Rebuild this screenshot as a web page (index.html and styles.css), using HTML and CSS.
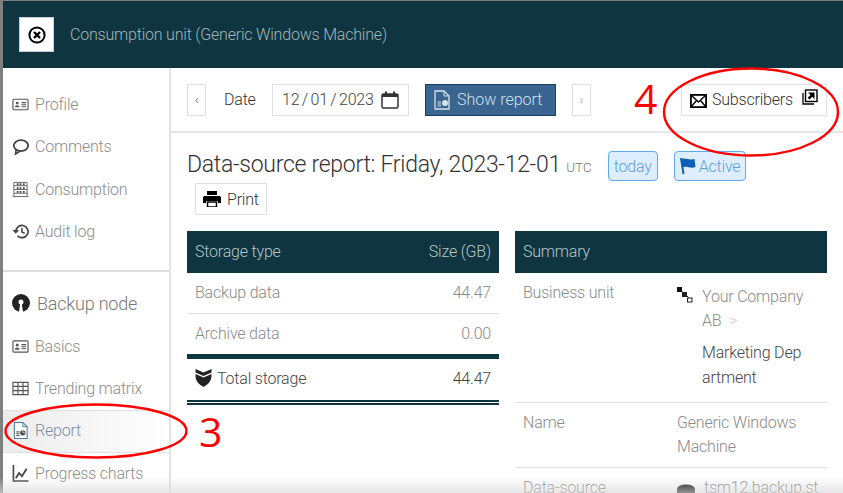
FILE: index.html
```html
<!DOCTYPE html>
<html lang="en">
<head>
<meta charset="utf-8">
<title>Consumption unit</title>
<link rel="stylesheet" href="styles.css">
</head>
<body>
<div class="app">
  <header class="topbar">
    <button class="close-btn" aria-label="Close">
      <svg width="18" height="18" viewBox="0 0 18 18"><circle cx="9" cy="9" r="7.6" fill="none" stroke="#000" stroke-width="2"/><path d="M6 6l6 6M12 6l-6 6" stroke="#000" stroke-width="2.4"/></svg>
    </button>
    <span class="topbar-title">Consumption unit (Generic Windows Machine)</span>
  </header>
  <div class="body">
    <nav class="sidebar">
      <ul class="nav-group nav-first">
        <li class="nav-item"><svg class="nav-icon" viewBox="0 0 18 18"><rect x="1" y="3.5" width="16" height="11" rx="1" fill="none" stroke="#555" stroke-width="1.2"/><circle cx="5.5" cy="7.5" r="1.5" fill="#555"/><path d="M3 12c0-3 5-3 5 0z" fill="#555"/><path d="M10 7h5M10 9.2h5M10 11.4h5" stroke="#555" stroke-width="1.1"/></svg>Profile</li>
        <li class="nav-item"><svg class="nav-icon" viewBox="0 0 18 18"><ellipse cx="9.5" cy="8" rx="7.6" ry="5.800" fill="none" stroke="#444" stroke-width="1.900"/><path d="M4.500 12l-.8 5 4.600-3" fill="none" stroke="#444" stroke-width="1.700"/></svg>Comments</li>
        <li class="nav-item nav-shift"><svg class="nav-icon" viewBox="0 0 18 18"><path d="M2 1.500v14.500M16 1.500v14.500M.5 16.500h17M2 1.500h14M2 5h14M2 9h14M2 13h14" fill="none" stroke="#666" stroke-width="1"/><path d="M6 2.500v10M9 2.500v10M12.500 2.500v10" stroke="#444" stroke-width="1.800" stroke-dasharray="2 2"/></svg>Consumption</li>
        <li class="nav-item"><svg class="nav-icon" viewBox="0 0 18 18"><path d="M4 8.500a6.500 6.500 0 1 1 1.900 5.200" fill="none" stroke="#444" stroke-width="1.800"/><path d="M.5 7.500h7l-3.500 4z" fill="#444"/><path d="M10.500 5v4.500l3 1.500" fill="none" stroke="#444" stroke-width="1.600"/></svg>Audit log</li>
      </ul>
      <ul class="nav-group nav-second">
        <li class="nav-item nav-heading"><svg class="nav-icon-lg" viewBox="0 0 18 18"><circle cx="9" cy="9" r="9" fill="#222"/><circle cx="9" cy="8" r="2.500" fill="#fff"/><path d="M8.300 9l-1.300 9h4l-1.300-9z" fill="#fff"/></svg>Backup node</li>
        <li class="nav-item"><svg class="nav-icon" viewBox="0 0 18 18"><rect x="1" y="3" width="16" height="12" rx="1" fill="none" stroke="#555" stroke-width="1.200"/><circle cx="5.500" cy="7.300" r="1.600" fill="#555"/><path d="M3 12.500c0-3.400 5-3.400 5 0z" fill="#555"/><path d="M10 7h5M10 9.200h5M10 11.400h5" stroke="#555" stroke-width="1.100"/></svg>Basics</li>
        <li class="nav-item nav-raise"><svg class="nav-icon" viewBox="0 0 18 18"><path d="M1 2.500h16v13H1zM1 6.800h16M1 11.200h16M6.300 2.500v13M11.700 2.500v13" fill="none" stroke="#555" stroke-width="1.200"/></svg>Trending matrix</li>
        <li class="nav-item nav-active"><svg class="nav-icon" viewBox="0 0 18 18"><path d="M2.500.5h9l4.500 4.500v12.500H2.500z" fill="#fff" stroke="#4a7aa0" stroke-width="1.100"/><path d="M11.500.5V5H16" fill="none" stroke="#4a7aa0"/><path d="M4.500 10.500h3.500M4.500 12.500h3.500M4.500 14.500h3.500" stroke="#333"/><circle cx="11.500" cy="11.500" r="2.800" fill="#444"/><path d="M11.500 8.700v2.800h2.800" fill="none" stroke="#fff" stroke-width=".7"/></svg>Report</li>
        <li class="nav-item"><svg class="nav-icon" viewBox="0 0 18 18"><path d="M1.500 0v17h16" fill="none" stroke="#444" stroke-width="1.700"/><path d="M4 14l3.500-5.500 3 3.500 5-8" fill="none" stroke="#444" stroke-width="1.900"/></svg>Progress charts</li>
      </ul>
    </nav>
    <main class="main">
      <div class="toolbar">
        <button class="btn btn-nav">‹</button>
        <label class="date-label">Date</label>
        <div class="date-input">12 / 01 / 2023
          <svg width="18" height="18" viewBox="0 0 18 18"><rect x="1" y="3" width="16" height="14" rx="1.500" fill="none" stroke="#333" stroke-width="1.500"/><path d="M1 3h16v3H1z" fill="#333"/><path d="M5 .5v3M13 .5v3" stroke="#333" stroke-width="2"/></svg>
        </div>
        <button class="btn-primary">
          <svg width="18" height="20" viewBox="0 0 18 20"><path d="M2 1h9l5 5v13H2z" fill="none" stroke="#d5e4f0" stroke-width="1.300"/><path d="M11 1v5h5" fill="none" stroke="#d5e4f0"/><path d="M4.500 12h3.500M4.500 14h3.500M4.500 16h3.500" stroke="#d5e4f0"/><circle cx="12" cy="13" r="3" fill="#d5e4f0"/></svg>
          Show report
        </button>
        <button class="btn btn-nav btn-faint">›</button>
        <button class="btn btn-subscribers">
          <svg class="mail-icon" width="17" height="14" viewBox="0 0 17 14"><rect x=".9" y=".9" width="15.200" height="12.200" fill="#fff" stroke="#000" stroke-width="1.800"/><path d="M1 1l7.500 7L16 1M1 13l5.500-6.500M16 13l-5.500-6.500" fill="none" stroke="#000" stroke-width="1.400"/></svg>
          <span class="sub-label">Subscribers</span>
          <svg class="ext-icon" width="16" height="16" viewBox="0 0 16 16"><path d="M1 4v11h11" fill="none" stroke="#000" stroke-width="1.300"/><rect x="3.500" y="1" width="11.500" height="11.500" fill="#fff" stroke="#000" stroke-width="1.400"/><path d="M6 3.500h6.500V10L10.300 7.800 7.500 10.500 5.700 8.800 8.500 6z" fill="#000"/></svg>
        </button>
      </div>
      <div class="content">
        <div class="title-row">
          <h1 class="report-title">Data-source report: Friday, 2023-12-01 <small class="utc">UTC</small></h1>
          <span class="badge">today</span>
          <span class="badge"><svg width="16" height="18" viewBox="0 0 16 18"><path d="M1 1l2.500 16" stroke="#0b5fb5" stroke-width="2"/><path d="M1.500 2c4-1.500 7 1.500 13 0l1 8c-5 2-9-1.500-13 .5z" fill="#0b5fb5"/></svg>Active</span>
        </div>
        <button class="btn btn-print">
          <svg width="18" height="16" viewBox="0 0 18 16"><path d="M4 0h10v4H4zM1.500 5h15a1.500 1.500 0 0 1 1.500 1.500V12h-3v-2H3v2H0V6.500A1.500 1.500 0 0 1 1.500 5z" fill="#000"/><path d="M4.500 11h9v5h-9z" fill="none" stroke="#000" stroke-width="1.500"/></svg>
          Print
        </button>
        <div class="tables">
          <section class="storage">
            <div class="thead"><span>Storage type</span><span>Size (GB)</span></div>
            <div class="row"><span>Backup data</span><span>44.47</span></div>
            <div class="row row-last"><span>Archive data</span><span>0.00</span></div>
            <div class="row-total">
              <span class="total-label"><svg width="17" height="18" viewBox="0 0 17 18"><path d="M.5 0l8 3.500 8-3.500v3.500l-8 3.500-8-3.500z" fill="#222"/><path d="M.5 5l8 3.500 8-3.500c.5 6-2.500 10-8 13C3 15 0 11 .5 5z" fill="#222"/></svg>Total storage</span>
              <span>44.47</span>
            </div>
          </section>
          <section class="summary">
            <div class="thead"><span>Summary</span></div>
            <div class="sum-row sum-unit">
              <span class="sum-key">Business unit</span>
              <div class="sum-val unit-val">
                <svg class="tree-icon" width="16" height="16" viewBox="0 0 16 16"><path d="M3 3l6 5 5 5" stroke="#222" fill="none"/><rect x="0" y="0" width="5" height="5" fill="#111"/><rect x="5" y="5" width="5" height="5" fill="#222"/><rect x="10.500" y="11" width="4.500" height="4" fill="#fff" stroke="#222"/></svg>
                <div>
                  <div class="unit-parent">Your Company<br>AB <span class="crumb">&gt;</span></div>
                  <div class="unit-child">Marketing Dep<br>artment</div>
                </div>
              </div>
            </div>
            <div class="sum-row sum-name">
              <span class="sum-key">Name</span>
              <div class="sum-val">Generic Windows<br>Machine</div>
            </div>
            <div class="sum-row sum-source">
              <span class="sum-key">Data-source</span>
              <div class="sum-val unit-val"><svg class="tree-icon disk" width="18" height="12" viewBox="0 0 18 12"><ellipse cx="9" cy="5" rx="9" ry="4.500" fill="#111"/><path d="M0 5v6h18V5z" fill="#111"/></svg>tsm12.backup.st</div>
            </div>
          </section>
        </div>
      </div>
    </main>
  </div>
  <div class="fade"></div>
  <svg class="annot" width="843" height="493" viewBox="0 0 843 493">
    <ellipse cx="751" cy="112" rx="87" ry="43.500" fill="none" stroke="#f00" stroke-width="2.400"/>
    <ellipse cx="96" cy="431" rx="90.500" ry="26.500" fill="none" stroke="#f00" stroke-width="2.400"/>
  </svg>
  <span class="num num-4">4</span>
  <span class="num num-3">3</span>
</div>
</body>
</html>
```
FILE: styles.css
```css
* { box-sizing: border-box; }
html, body { margin: 0; padding: 0; }
body { width: 843px; height: 493px; overflow: hidden; background: #7f7f7f; font-family: Roboto, "Liberation Sans", sans-serif; font-weight: 300; font-size: 16px; letter-spacing: -.2px; }
button { font: inherit; letter-spacing: inherit; cursor: pointer; }
ul { list-style: none; margin: 0; padding: 0; }

.app { position: relative; width: 843px; height: 493px; padding: 1px 0 0 3px; overflow: hidden; }

.topbar { height: 67px; background: #0e3540; display: flex; align-items: center; padding-left: 16px; gap: 16px; }
.close-btn { width: 35px; height: 35px; background: #fff; border: 1px solid #ccd; padding: 0; display: flex; align-items: center; justify-content: center; }
.topbar-title { color: #a3b6ba; font-size: 16px; letter-spacing: -.2px; }

.body { display: flex; height: 425px; background: #fff; }
.sidebar { width: 168px; flex: none; border-right: 2px solid #e2e2e2; padding-top: 15px; }
.nav-first { padding-bottom: 18px; border-bottom: 2px solid #ddd; }
.nav-second { padding-top: 11px; }
.nav-item { height: 42.35px; display: flex; align-items: center; padding-left: 9px; gap: 6px; color: #8c8c8c; font-size: 16px; }
.nav-shift { padding-top: 2px; }
.nav-raise { padding-bottom: 2px; }
.nav-icon { width: 17px; height: 17px; flex: none; }
.nav-icon-lg { width: 18px; height: 18px; flex: none; }
.nav-heading { font-size: 18px; color: #777; gap: 7px; padding-bottom: 3px; }
.nav-active { background: linear-gradient(90deg, #ececec, #fff); border-top: 1px solid #e0e0e0; border-bottom: 1px solid #e0e0e0; color: #7d8fa0; padding-bottom: 2px; }

.main { flex: 1; min-width: 0; }
.toolbar { height: 65px; border-bottom: 2px solid #e6e6e6; display: flex; align-items: center; padding: 0 16px; }
.btn { background: #fff; border: 1px solid #e0e0e0; color: #333; height: 32px; display: inline-flex; align-items: center; }
.btn-nav { width: 19px; justify-content: center; padding: 0; font-size: 13px; color: #556; }
.btn-faint { color: #999; margin-left: 16px; }
.date-label { margin-left: 18px; width: 32px; color: #333; font-size: 16px; }
.date-input { margin-left: 16px; width: 137px; height: 32px; border: 1px solid #e0e0e0; display: flex; align-items: center; justify-content: space-between; padding: 0 9px; color: #444; white-space: nowrap; word-spacing: -1.2px; }
.btn-primary { margin-left: 16px; width: 131px; height: 32px; background: #3a658f; border: 1px solid #1c3d5c; color: #cfe0ee; display: flex; align-items: center; gap: 6px; padding: 0 7px; letter-spacing: 0; }
.btn-subscribers { margin-left: auto; width: 146px; padding: 0 8px; gap: 5px; color: #333; }
.mail-icon { margin-top: 3px; }
.ext-icon { margin-bottom: 6px; }
.sub-label { flex: 1; text-align: left; }

.content { padding: 18px 16px 0; }
.title-row { display: flex; align-items: center; height: 30px; }
.report-title { font-size: 23px; font-weight: 300; color: #333; letter-spacing: -.28px; margin: 0 16px 0 0; white-space: nowrap; line-height: 30px; }
.utc { font-size: 13.500px; color: #777; letter-spacing: 0; }
.badge { display: inline-flex; align-items: center; gap: 3px; height: 30px; padding: 0 5px; margin-right: 16px; background: #dfeeff; border: 1px solid #5fa9ec; border-radius: 4px; color: #5a9fdd; font-size: 16px; }
.btn-print { margin: 2px 0 16px 8px; width: 72px; padding: 0 7px; gap: 6px; }

.tables { display: grid; grid-template-columns: 312px 312px; gap: 16px; }
.thead { height: 42px; background: #0e3540; color: #b5c6ca; display: flex; justify-content: space-between; align-items: center; padding: 0 8px 2px; }
.row { height: 41px; display: flex; justify-content: space-between; align-items: center; padding: 0 8px 2px; border-bottom: 1px solid #e2e2e2; color: #8a8a8a; }
.row-last { height: 45px; border-bottom: 5px solid #0e3540; }
.row-total { height: 46px; display: flex; justify-content: space-between; align-items: center; padding: 0 8px 3px; border-bottom: 5px double #0e3540; color: #444; }
.total-label { display: flex; align-items: center; gap: 5px; }

.sum-row { display: grid; grid-template-columns: 154px 1fr; padding: 0 8px; border-bottom: 1px solid #e2e2e2; color: #8a8a8a; line-height: 24px; }
.sum-unit { height: 130px; padding-top: 8px; }
.sum-name { height: 65px; padding-top: 8px; }
.sum-source { border-bottom: 0; padding-top: 8px; }
.sum-key { white-space: nowrap; }
.unit-val { display: flex; gap: 9px; }
.tree-icon { flex: none; margin-top: 6px; }
.disk { margin-top: 8px; }
.sum-unit .tree-icon { margin-top: 6px; }
.unit-parent { padding-top: 4px; }
.crumb { color: #ccc; margin-left: 4px; }
.unit-child { margin-top: 7px; color: #444; line-height: 25px; }

.fade { position: absolute; left: 0; right: 0; bottom: 0; height: 16px; background: linear-gradient(rgba(225,225,225,0), rgba(218,218,218,.65)); }
.annot { position: absolute; left: 0; top: 0; pointer-events: none; }
.num { position: absolute; color: #f00; font-family: "Open Sans", sans-serif; font-weight: 400; font-size: 41px; line-height: 1; letter-spacing: 0; }
.num-4 { left: 634px; top: 78px; }
.num-3 { left: 199px; top: 411px; }
```
